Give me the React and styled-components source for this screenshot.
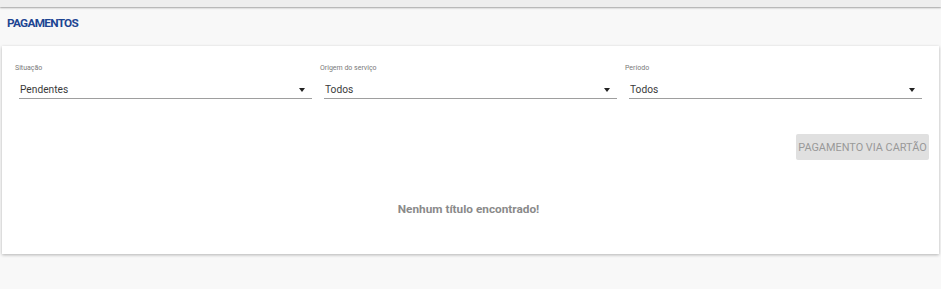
import React from "react";
import styled, { createGlobalStyle } from "styled-components";

const Global = createGlobalStyle`
  html, body { margin: 0; padding: 0; background: #f8f8f8; }
  body { font-family: Roboto, "Liberation Sans", sans-serif; }
`;

const Page = styled.div`
  width: 941px;
  height: 289px;
  background: #f8f8f8;
  overflow: hidden;
`;

const TopBar = styled.div`
  height: 7px;
  background: #eeeeee;
  box-shadow: 0 1px 2px rgba(0,0,0,0.35);
`;

const Title = styled.h1`
  margin: 0;
  padding: 10px 7px 0;
  height: 29px;
  box-sizing: border-box;
  font-size: 11.8px;
  line-height: 13px;
  font-weight: 700;
  color: #1d4592;
  letter-spacing: -0.7px;
`;

const Card = styled.div`
  margin: 10px 2px 0 2px;
  height: 208px;
  background: #fff;
  box-shadow: 0 1px 3px rgba(0,0,0,0.28);
  padding: 18px 17px 0 13px;
  box-sizing: border-box;
`;

const Filters = styled.div`
  display: grid;
  grid-template-columns: repeat(3, 1fr);
  column-gap: 8px;
`;

const Field = styled.div`
  display: flex;
  flex-direction: column;
`;

const Label = styled.label`
  font-size: 7px;
  line-height: 9px;
  color: #7a7a7a;
`;

const Select = styled.div`
  margin: 5px 0 0 4px;
  height: 21px;
  border-bottom: 1px solid #9e9e9e;
  display: flex;
  align-items: center;
  justify-content: space-between;
  padding: 3px 7px 0 1px;
  box-sizing: border-box;
  font-size: 10.2px;
  color: #3a3a3a;
`;

const Arrow = styled.span`
  width: 0;
  height: 0;
  border-left: 3.5px solid transparent;
  border-right: 3.5px solid transparent;
  border-top: 4px solid #222;
`;

const Actions = styled.div`
  display: flex;
  justify-content: flex-end;
  margin: 35px -7px 0 0;
`;

const Button = styled.button`
  height: 26px;
  width: 133px;
  border: none;
  border-radius: 2px;
  background: #e0e0e0;
  color: #999;
  font-family: Roboto, "Liberation Sans", sans-serif;
  font-size: 10.9px;
  font-weight: 400;
  text-transform: uppercase;
  padding: 0;
`;

const Empty = styled.div`
  text-align: center;
  margin-top: 42px;
  font-size: 11.8px;
  font-weight: 700;
  color: #8a8a8a;
`;

const filters = [
  { label: "Situação", value: "Pendentes" },
  { label: "Origem do serviço", value: "Todos" },
  { label: "Período", value: "Todos" },
];

export default function App() {
  return (
    <Page>
      <Global />
      <TopBar />
      <Title>PAGAMENTOS</Title>
      <Card>
        <Filters>
          {filters.map((f) => (
            <Field key={f.label}>
              <Label>{f.label}</Label>
              <Select>
                <span>{f.value}</span>
                <Arrow />
              </Select>
            </Field>
          ))}
        </Filters>
        <Actions>
          <Button>Pagamento via cartão</Button>
        </Actions>
        <Empty>Nenhum título encontrado!</Empty>
      </Card>
    </Page>
  );
}
